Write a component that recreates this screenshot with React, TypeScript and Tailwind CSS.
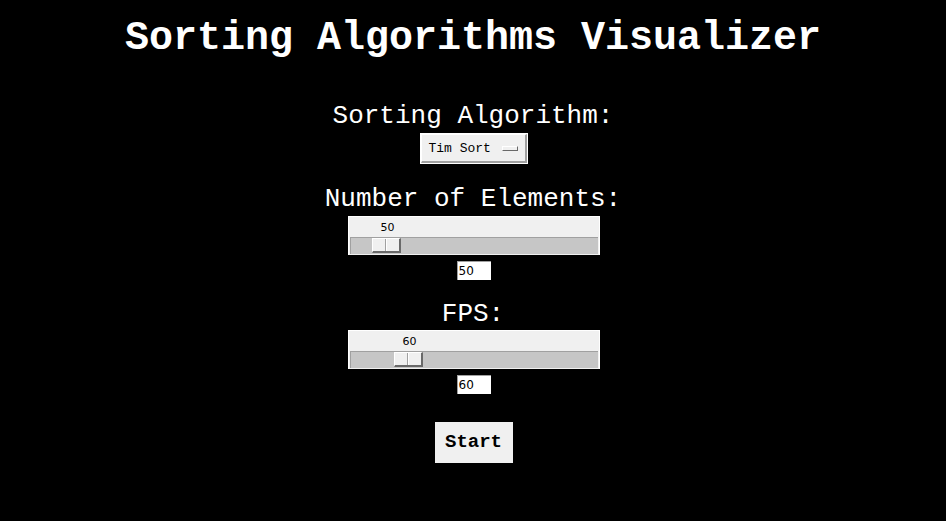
import { useState } from "react";

const mono = "font-['Courier_New','Liberation_Mono',monospace]";
const sans = "font-['DejaVu_Sans','Liberation_Sans',sans-serif]";

type ScaleProps = {
  value: number;
  thumbLeft: number;
};

function Scale({ value, thumbLeft }: ScaleProps) {
  return (
    <div className="ml-[1px] flex h-[39px] w-[252px] flex-col bg-white p-[1px]">
      <div className="flex flex-1 flex-col bg-[#f0f0f0] px-[1px] pb-[1px]">
        <div className="relative h-[20px]">
          <span
            className={`absolute top-[5px] -translate-x-1/2 text-[11px] leading-[12px] text-black ${sans}`}
            style={{ left: thumbLeft + 15 }}
          >
            {value}
          </span>
        </div>
        <div className="relative h-[17px] border-t border-l border-[#a0a0a0] bg-[#c6c6c6]">
          <div
            className="absolute top-0 flex h-[15px] w-[29px] border-t border-l border-white border-r-2 border-b-2 border-r-[#696969] border-b-[#696969] bg-[#f0f0f0]"
            style={{ left: thumbLeft - 2 }}
          >
            <div className="flex-1 border-r border-[#a0a0a0]" />
            <div className="flex-1 border-l border-white" />
          </div>
        </div>
      </div>
    </div>
  );
}

function Entry({ value }: { value: string }) {
  return (
    <div
      className={`mt-[6px] ml-[1px] flex h-[19px] w-[34px] items-center border-t border-l border-[#a0a0a0] bg-white px-[1px] text-[12px] leading-none text-black ${sans}`}
    >
      {value}
    </div>
  );
}

export default function App() {
  const [algo] = useState("Tim Sort");

  return (
    <div className={`flex min-h-[521px] w-full flex-col items-center bg-black text-white ${mono}`}>
      <h1 className="mt-[15px] h-[48px] text-[40px] font-bold leading-[48px]">
        Sorting Algorithms Visualizer
      </h1>

      <div className="mt-[38px] h-[30px] text-[26px] leading-[30px]">Sorting Algorithm:</div>
      <div className="mt-[2px] ml-[1px] h-[31px] w-[108px] bg-white p-[1px]">
        <div className="flex h-full items-center justify-between border-t border-l border-white border-r-2 border-b-2 border-r-[#a0a0a0] border-b-[#a0a0a0] bg-[#f0f0f0] pr-[7px] pl-[7px]">
          <span className="text-[13px] leading-none text-black">{algo}</span>
          <span className="h-[5px] w-[16px] border-t border-l border-white border-r border-b border-r-[#696969] border-b-[#696969] bg-[#f0f0f0]" />
        </div>
      </div>

      <div className="mt-[20px] h-[30px] text-[26px] leading-[30px]">Number of Elements:</div>
      <div className="mt-[2px]">
        <Scale value={50} thumbLeft={23} />
      </div>
      <Entry value="50" />

      <div className="mt-[19px] h-[30px] text-[26px] leading-[30px]">FPS:</div>
      <div className="mt-[1px]">
        <Scale value={60} thumbLeft={45} />
      </div>
      <Entry value="60" />

      <button className="mt-[28px] ml-[1px] h-[41px] w-[78px] bg-[#f0f0f0] text-[19px] font-bold leading-none text-black">
        Start
      </button>
    </div>
  );
}
